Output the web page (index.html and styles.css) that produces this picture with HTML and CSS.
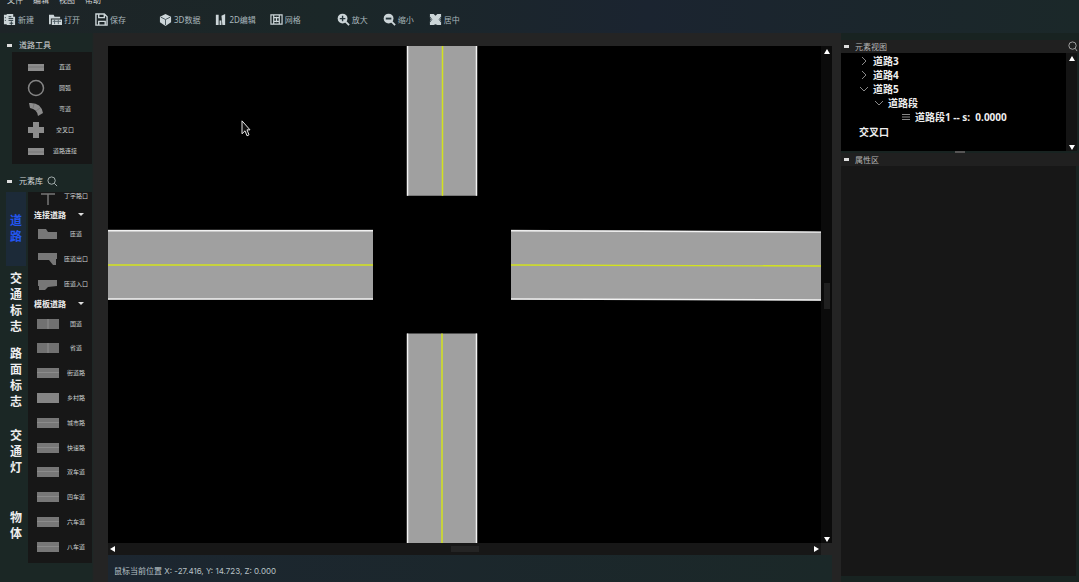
FILE: index.html
```html
<!DOCTYPE html>
<html lang="zh-CN">
<head>
<meta charset="utf-8">
<title>道路编辑器</title>
<link rel="stylesheet" href="styles.css">
</head>
<body>
<div class="app">
<header class="top">
  <nav class="menu"><button>文件</button><button>编辑</button><button>视图</button><button>帮助</button></nav>
  <div class="toolbar">
    <button class="tool"><svg viewBox="0 0 14 14"><path d="M1 2h3v10H1zM4 1h7v3h2v9H4z" fill="#ccd5d8"/><path d="M6 4h3M6 6h5M6 8h5M2 5h1M2 8h1" stroke="#26353b"/><path d="M9 9v4M7 11h4" stroke="#26353b"/></svg>新建</button>
    <button class="tool"><svg viewBox="0 0 14 14"><path d="M0 2h5l1 2h6v2H2v6H0zM3 7h11v6H3z" fill="#ccd5d8"/><path d="M4 9h9M6 7v5M10 7v5" stroke="#516067"/></svg>打开</button>
    <button class="tool"><svg viewBox="0 0 14 14"><path d="M1 1h9l3 3v9H1zM4 1v4h6V1M4 13V9h7v4" fill="none" stroke="#ccd5d8" stroke-width="1.5"/></svg>保存</button>
    <span class="gap"></span>
    <button class="tool"><svg viewBox="0 0 14 14"><path d="M7 1l6 3v6l-6 4-6-4V4z" fill="#ccd5d8"/><path d="M2 4.500l5 2.500 5-2.500M7 7v6" fill="none" stroke="#435157"/></svg>3D数据</button>
    <button class="tool"><svg viewBox="0 0 14 14"><path d="M2 2h3v11H2zM6 8h2v5H6zM8 3l4-2v12H9z" fill="#ccd5d8"/></svg>2D编辑</button>
    <button class="tool"><svg viewBox="0 0 14 14"><path d="M1 2h12v10H1zM4 2v10M10 2v10M4 5h6M4 9h6M7 4v6" fill="none" stroke="#ccd5d8" stroke-width="1.300"/></svg>网格</button>
    <span class="gap wide"></span>
    <button class="tool"><svg viewBox="0 0 14 14"><circle cx="6" cy="6" r="5.300" fill="#ccd5d8"/><path d="M9 9l4 4" stroke="#ccd5d8" stroke-width="2"/><path d="M3 6h6M6 3v6" stroke="#26353b" stroke-width="1.500"/></svg>放大</button>
    <button class="tool"><svg viewBox="0 0 14 14"><circle cx="6" cy="6" r="5.300" fill="#ccd5d8"/><path d="M9 9l4 4" stroke="#ccd5d8" stroke-width="2"/><path d="M3 6h6" stroke="#26353b" stroke-width="2"/></svg>缩小</button>
    <button class="tool"><svg viewBox="0 0 14 14"><path d="M1 1h4l2 2 2-2h4v4l-1 2 1 2v4H9l-2-1-2 1H1V9l1-2-1-2z" fill="#ccd5d8"/><path d="M1 4l2 3-2 3M13 4l-2 3 2 3" stroke="#46545b" fill="none"/></svg>居中</button>
  </div>
</header>

<aside class="left">
  <h2 class="title"><span class="mark"></span>道路工具</h2>
  <div class="tools">
    <button class="item"><svg viewBox="0 0 22 18"><path d="M3 6h16v7H3z" fill="#8c8c8c"/><path d="M3 9h16" stroke="#777"/></svg><span>直道</span></button>
    <button class="item"><svg viewBox="0 0 22 18"><circle cx="11" cy="9" r="7.500" fill="none" stroke="#858585" stroke-width="1.500"/></svg><span>圆弧</span></button>
    <button class="item"><svg viewBox="0 0 22 18"><path d="M4 3q12-1 14 10l-5 3Q12 9 5 8z" fill="#8c8c8c"/><path d="M9 4l-1 4M15 8l-4 3" stroke="#777"/></svg><span>弯道</span></button>
    <button class="item"><svg viewBox="0 0 22 18"><path d="M8 1h6v5h5v6h-5v5H8v-5H3V6h5z" fill="#8c8c8c"/></svg><span>交叉口</span></button>
    <button class="item"><svg viewBox="0 0 22 18"><path d="M3 6h16v7H3z" fill="#8c8c8c"/><path d="M3 10h16" stroke="#777"/></svg><span>道路连接</span></button>
  </div>
  <h2 class="title library"><span class="mark"></span>元素库<button class="find" aria-label="搜索元素"><svg viewBox="0 0 12 12"><circle cx="5" cy="5" r="4" fill="none" stroke="#aeb8b8"/><path d="M8 8l3 3" stroke="#aeb8b8"/></svg></button></h2>
  <div class="browser">
    <nav class="tabs"><button class="tab on">道路</button><button class="tab">交通标志</button><button class="tab">路面标志</button><button class="tab">交通灯</button><button class="tab">物体</button></nav>
    <div class="list">
      <button class="item cut"><svg viewBox="0 0 24 14"><path d="M5 2h14M12 2v11" stroke="#777" stroke-width="1.500"/></svg><span>丁字路口</span></button>
      <button class="group">连接道路<i></i></button>
      <div class="links">
      <button class="item"><svg viewBox="0 0 24 14"><path d="M2 2h8l2 3h9v7H2z" fill="#777"/></svg><span>匝道</span></button>
      <button class="item"><svg viewBox="0 0 24 14"><path d="M2 1h19v6h-1v6h-3l-4-5H2z" fill="#777"/></svg><span>匝道出口</span></button>
      <button class="item"><svg viewBox="0 0 24 14"><path d="M2 3h19v6l-9 1-3 3H3V9H2z" fill="#777"/></svg><span>匝道入口</span></button>
      </div>
      <button class="group">模板道路<i></i></button>
      <div class="templates">
      <button class="item"><span class="road split"></span><span>国道</span></button>
      <button class="item"><span class="road split"></span><span>省道</span></button>
      <button class="item"><span class="road"></span><span>街道路</span></button>
      <button class="item"><span class="road light"></span><span>乡村路</span></button>
      <button class="item"><span class="road"></span><span>城市路</span></button>
      <button class="item"><span class="road"></span><span>快速路</span></button>
      <button class="item"><span class="road"></span><span>双车道</span></button>
      <button class="item"><span class="road"></span><span>四车道</span></button>
      <button class="item"><span class="road"></span><span>六车道</span></button>
      <button class="item"><span class="road"></span><span>八车道</span></button>
      </div>
    </div>
  </div>
</aside>

<main class="stage">
  <svg class="canvas" viewBox="0 0 713 498" preserveAspectRatio="none">
    <g fill="#a0a0a0"><path d="M299 0h70v150h-70zM299 288h70v210h-70zM0 184h265v70H0zM403 184l310 2v69l-310-1z"/></g>
    <g fill="none" stroke="#f2f2f2" stroke-width="1.500"><path d="M299.500 0v150M368.500 0v150M299.500 288v210M368.500 288v210M0 185h265M0 253.500h265M403 185l310 1.500M403 253.500l310 1"/></g>
    <g fill="none" stroke="#d2e21e" stroke-width="1.500"><path d="M334.500 0v150M334 288v210M0 219.500h265M403 219.500l310 1"/></g>
    <path d="M134 75v13l3-3 2 5 2-1-2-5h3z" fill="#111" stroke="#e8e8e8"/>
  </svg>
  <div class="vbar"><i class="up"></i><b></b><i class="down"></i></div>
  <div class="hbar"><i class="prev"></i><b></b><i class="next"></i></div>
</main>

<footer class="status">鼠标当前位置 X: -27.416, Y: 14.723, Z: 0.000</footer>

<aside class="right">
  <h2 class="head"><span class="mark"></span>元素视图<button class="find" aria-label="搜索视图"><svg viewBox="0 0 12 12"><circle cx="6" cy="5" r="4" fill="none" stroke="#aaa"/><path d="M9 8l2 3" stroke="#aaa"/></svg></button></h2>
  <div class="treebox">
    <ul class="tree">
      <li class="l1"><svg viewBox="0 0 8 8"><path d="M2 0l4 4-4 4" /></svg>道路3</li>
      <li class="l1"><svg viewBox="0 0 8 8"><path d="M2 0l4 4-4 4" /></svg>道路4</li>
      <li class="l1"><svg viewBox="0 0 8 8"><path d="M0 2l4 4 4-4" /></svg>道路5</li>
      <li class="l2"><svg viewBox="0 0 8 8"><path d="M0 2l4 4 4-4" /></svg>道路段</li>
      <li class="l3"><svg viewBox="0 0 8 8"><path d="M0 1.500h8M0 4h8M0 6.500h8" /></svg>道路段1 -- s:&nbsp; 0.0000</li>
      <li class="l0">交叉口</li>
    </ul>
    <div class="vbar"><i class="up"></i><i class="down"></i></div>
  </div>
  <div class="grip"></div>
  <h2 class="head"><span class="mark"></span>属性区</h2>
  <div class="props"></div>
</aside>
</div>
</body>
</html>
```
FILE: styles.css
```css
* { box-sizing: border-box; }
body { margin: 0; background: #1c2626; color: #d0d5d5; font: 8px/12px "Noto Sans", "Noto Sans CJK SC", sans-serif; }
button { background: none; border: 0; padding: 0; margin: 0; color: inherit; font: inherit; white-space: nowrap; }
h2 { margin: 0; font: inherit; }
svg { display: block; flex: none; }
.app { display: grid; height: 100vh; grid-template: 33px 1fr 27px / 108px 1fr 247px; background: #1c2626; }
.top { grid-column: 1 / -1; background: linear-gradient(90deg, #1d2427, #1b2728 30%, #1b2430 60%, #1b2829); overflow: hidden; }
.menu { height: 6px; display: flex; align-items: flex-end; gap: 10px; padding-left: 7px; }
.toolbar { display: flex; align-items: center; height: 27px; padding-left: 3px; gap: 14px; color: #a9b7bc; }
.tool { display: flex; align-items: center; gap: 2px; min-width: 32px; }
.tool svg { width: 13px; height: 13px; }
.gap { width: 4px; }
.gap.wide { width: 7px; }

.left { grid-row: 2 / 4; display: flex; flex-direction: column; padding: 5px 16px 19px 6px; background: linear-gradient(90deg, #1b2725 0 92px, #242424 94px); min-height: 0; }
.title { display: flex; align-items: center; height: 14px; gap: 7px; padding-left: 1px; }
.mark { flex: none; width: 5px; height: 3px; background: #ddd; }
.tools { margin-left: 6px; background: #171717; height: 112px; padding: 4px 0 2px; display: flex; flex-direction: column; }
.item { display: grid; align-items: center; justify-items: center; flex: 1; width: 100%; font-size: 6px; line-height: 10px; min-height: 0; }
.tools .item { padding: 0 13px; grid-template-columns: 22px 36px; }
.tools .item svg { width: 22px; height: 18px; }
.library { margin-top: 10px; }
.find svg { width: 11px; height: 11px; }
.library .find { margin-left: -3px; }
.browser { flex: 1; display: flex; gap: 2px; min-height: 0; margin-top: 4px; }
.tabs { width: 20px; display: flex; flex-direction: column; }
.tab { flex: 1; padding: 0 4px; white-space: normal; word-break: break-all; font-size: 12px; line-height: 16px; font-weight: bold; color: #eee; }
.tab.on { background: #1c2a38; color: #2355ef; }
.list { flex: 1; background: #171717; display: flex; flex-direction: column; padding: 0 0 4px 4px; min-width: 0; min-height: 0; }
.list .item { grid-template-columns: 32px 24px; justify-content: start; }
.list svg { width: 24px; height: 14px; }
.item.cut { flex: none; height: 15px; align-items: start; line-height: 8px; }
.group { height: 15px; display: flex; align-items: center; justify-content: space-between; padding: 0 8px 0 2px; font-weight: bold; color: #eee; flex: none; }
.group i { border: 3px solid transparent; border-top-color: #ddd; border-bottom: 0; }
.links { flex: 3; display: flex; flex-direction: column; }
.templates { flex: 10; display: flex; flex-direction: column; }
.road { width: 22px; height: 10px; background: linear-gradient(#777 4px, #8b8b8b 4px 5px, #777 5px); }
.road.light { background: #858585; }
.road.split { background: linear-gradient(90deg, #717171 10px, #808080 10px 12px, #717171 12px); }

.stage { display: grid; grid-template: 1fr 12px / 1fr 11px; padding-top: 13px; background: #242424; min-height: 0; }
.canvas { width: 100%; height: 100%; min-height: 0; background: #000; }
.vbar { display: flex; flex-direction: column; align-items: center; justify-content: space-between; background: #0b0b0b; padding: 3px 0 1px; }
.hbar { display: flex; align-items: center; justify-content: space-between; background: #171717; padding: 0 2px; }
.vbar b { width: 6px; height: 26px; background: #1f1f1f; }
.hbar b { width: 28px; height: 6px; background: #242424; }
.up, .down, .prev, .next { border: 3px solid transparent; }
.up { border-bottom: 5px solid #fff; border-top: 0; }
.down { border-top: 5px solid #fff; border-bottom: 0; }
.prev { border-right: 5px solid #fff; border-left: 0; }
.next { border-left: 5px solid #fff; border-right: 0; }
.status { grid-area: 3 / 2; padding: 10px 6px 0; background: linear-gradient(90deg, #1c2630, #1b2828); color: #b8c2c6; font-family: Inter, "Noto Sans CJK SC", sans-serif; }

.right { grid-area: 2 / 3 / 4 / 4; display: flex; flex-direction: column; padding: 7px 0 6px 9px; background: linear-gradient(90deg, #242424 9px, #182321 9px); min-height: 0; }
.head { display: flex; align-items: center; height: 13px; gap: 6px; background: #202020; color: #b5b5b5; flex: none; padding: 0 1px 0 3px; }
.head .find { margin-left: auto; }
.treebox { display: flex; height: 98px; background: #000; flex: none; margin-right: 2px; }
.tree { list-style: none; margin: 0; padding: 1px 0 0 13px; flex: 1; font-size: 10px; line-height: 14px; font-weight: bold; color: #eee; }
.tree li { display: flex; align-items: center; height: 14px; gap: 5px; white-space: nowrap; }
.tree li.l0 { height: 16px; padding-left: 5px; }
.l1 { padding-left: 6px; }
.l2 { padding-left: 21px; }
.l3 { padding-left: 48px; }
.tree svg { width: 8px; height: 8px; fill: none; stroke: #888; }
.treebox .vbar { width: 11px; background: #141414; }
.grip { height: 2px; width: 10px; align-self: center; background: #555; }
.props { flex: 1; background: #171717; margin-right: 3px; }
```
